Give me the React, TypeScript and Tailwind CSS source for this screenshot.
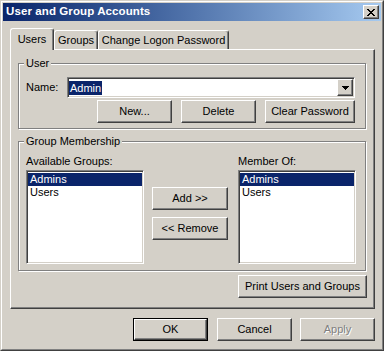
import React from 'react';

const face = 'bg-[#d4d0c8]';
const raised =
  'border border-t-white border-l-white border-r-[#404040] border-b-[#404040] shadow-[inset_-1px_-1px_0_#808080]';
const sunken =
  'border border-t-[#808080] border-l-[#808080] border-r-white border-b-white shadow-[inset_1px_1px_0_#404040,inset_-1px_-1px_0_#d4d0c8]';
const etched = 'border border-[#808080] shadow-[inset_1px_1px_0_#fff,1px_1px_0_#fff]';

type BtnProps = {
  label: string;
  w: string;
  isDefault?: boolean;
  disabled?: boolean;
  className?: string;
};

const Btn: React.FC<BtnProps> = ({ label, w, isDefault, disabled, className = '' }) => {
  const text = disabled ? 'text-[#808080] [text-shadow:1px_1px_0_#fff]' : 'text-black';
  if (isDefault) {
    return (
      <div className={`${w} h-[23px] border border-black shrink-0 ${className}`}>
        <div className={`h-full ${raised} ${face} flex items-center justify-center ${text}`}>{label}</div>
      </div>
    );
  }
  return (
    <div className={`${w} h-[23px] shrink-0 ${raised} ${face} flex items-center justify-center ${text} ${className}`}>
      {label}
    </div>
  );
};

const GroupBox: React.FC<{ title: string; className?: string; children: React.ReactNode }> = ({
  title,
  className = '',
  children,
}) => (
  <div className={`${etched} w-[348px] flex flex-col ${className}`}>
    <span className={`-mt-[7px] ml-[5px] self-start px-[2px] h-[13px] leading-[13px] ${face}`}>{title}</span>
    {children}
  </div>
);

const ListBox: React.FC<{ items: string[]; selected: number }> = ({ items, selected }) => (
  <div className={`w-[118px] h-[94px] bg-white ${sunken} p-px`}>
    <div className="pt-px">
      {items.map((item, i) => (
        <div
          key={item}
          className={`h-[13px] leading-[13px] pl-[2px] ${i === selected ? 'bg-[#0a246a] text-white' : 'text-black'}`}
        >
          {item}
        </div>
      ))}
    </div>
  </div>
);

const Tab: React.FC<{ label: string; w: string; active?: boolean }> = ({ label, w, active }) => (
  <div
    className={`${w} ${
      active ? 'h-[22px] -mb-px relative z-10' : 'h-[19px]'
    } ${face} border-t border-l border-r border-t-white border-l-white border-r-[#404040] rounded-t-[3px] shadow-[inset_-1px_0_0_#808080] flex items-center justify-center shrink-0`}
  >
    {label}
  </div>
);

const App: React.FC = () => {
  return (
    <div
      className={`w-[384px] h-[351px] ${face} border border-t-[#d4d0c8] border-l-[#d4d0c8] border-r-[#404040] border-b-[#404040] font-['Liberation_Sans',Arial,sans-serif] text-[11px] text-black overflow-hidden`}
    >
      <div className="h-full border border-t-white border-l-white border-r-[#808080] border-b-[#808080] p-px flex flex-col">
        {/* title bar */}
        <div className="h-[18px] shrink-0 flex items-center pl-[3px] pr-[2px] bg-gradient-to-r from-[#0a246a] to-[#a6caf0]">
          <span className="flex-1 text-white font-bold text-[11.5px] leading-none tracking-[0.1px]">
            User and Group Accounts
          </span>
          <div className={`w-[16px] h-[14px] ${raised} ${face} flex items-center justify-center`}>
            <svg width="8" height="7" viewBox="0 0 8 7" shapeRendering="crispEdges">
              <path d="M0 0h2v1h-2zM6 0h2v1h-2zM1 1h2v1h-2zM5 1h2v1h-2zM2 2h4v1h-4zM3 3h2v1h-2zM2 4h4v1h-4zM1 5h2v1h-2zM5 5h2v1h-2zM0 6h2v1h-2zM6 6h2v1h-2z" fill="#000" />
            </svg>
          </div>
        </div>

        {/* body */}
        <div className="flex-1 flex flex-col pl-[7px] pr-[6px] pt-[7px]">
          <div className="h-[21px] flex items-end">
            <Tab label="Users" w="w-[44px]" active />
            <Tab label="Groups" w="w-[44px]" />
            <Tab label="Change Logon Password" w="w-[131px]" />
          </div>

          <div
            className={`w-[365px] h-[260px] border border-t-white border-l-white border-r-[#404040] border-b-[#404040] shadow-[inset_-1px_-1px_0_#808080] pt-[13px] pl-[7px] pr-[7px] flex flex-col`}
          >
            <GroupBox title="User" className="pb-[5px]">
              <div className="mt-[7px] flex items-center pl-[7px]">
                <span className="w-[41px]">Name:</span>
                <div className={`w-[288px] h-[21px] bg-white ${sunken} flex items-center pl-px pr-px`}>
                  <div className="flex-1 flex items-center">
                    <span className="bg-[#0a246a] text-white h-[14px] leading-[14px] px-px">Admin</span>
                  </div>
                  <div className={`w-[16px] h-[17px] ${raised} ${face} flex items-center justify-center`}>
                    <svg width="7" height="4" viewBox="0 0 7 4" shapeRendering="crispEdges">
                      <path d="M0 0h7v1h-7zM1 1h5v1h-5zM2 2h3v1h-3zM3 3h1v1h-1z" fill="#000" />
                    </svg>
                  </div>
                </div>
              </div>
              <div className="mt-[2px] flex justify-end pr-[10px]">
                <Btn label="New..." w="w-[75px]" />
                <Btn label="Delete" w="w-[75px]" className="ml-[9px]" />
                <Btn label="Clear Password" w="w-[90px]" className="ml-[9px]" />
              </div>
            </GroupBox>

            <GroupBox title="Group Membership" className="mt-[12px] pb-[6px]">
              <div className="mt-[7px] flex pl-[7px]">
                <div className="flex flex-col">
                  <span className="h-[13px] leading-[13px]">Available Groups:</span>
                  <div className="mt-[2px]">
                    <ListBox items={['Admins', 'Users']} selected={0} />
                  </div>
                </div>
                <div className="ml-[8px] flex flex-col pt-[32px]">
                  <Btn label="Add >>" w="w-[76px]" />
                  <Btn label="<< Remove" w="w-[76px]" className="mt-[7px]" />
                </div>
                <div className="ml-[10px] flex flex-col">
                  <span className="h-[13px] leading-[13px]">Member Of:</span>
                  <div className="mt-[2px]">
                    <ListBox items={['Admins', 'Users']} selected={0} />
                  </div>
                </div>
              </div>
            </GroupBox>

            <div className="mt-[4px] flex justify-end">
              <Btn label="Print Users and Groups" w="w-[129px]" />
            </div>
          </div>

          <div className="mt-[9px] flex justify-end">
            <Btn label="OK" w="w-[75px]" isDefault />
            <Btn label="Cancel" w="w-[75px]" className="ml-[9px]" />
            <Btn label="Apply" w="w-[75px]" disabled className="ml-[8px]" />
          </div>
        </div>
      </div>
    </div>
  );
};

export default App;
